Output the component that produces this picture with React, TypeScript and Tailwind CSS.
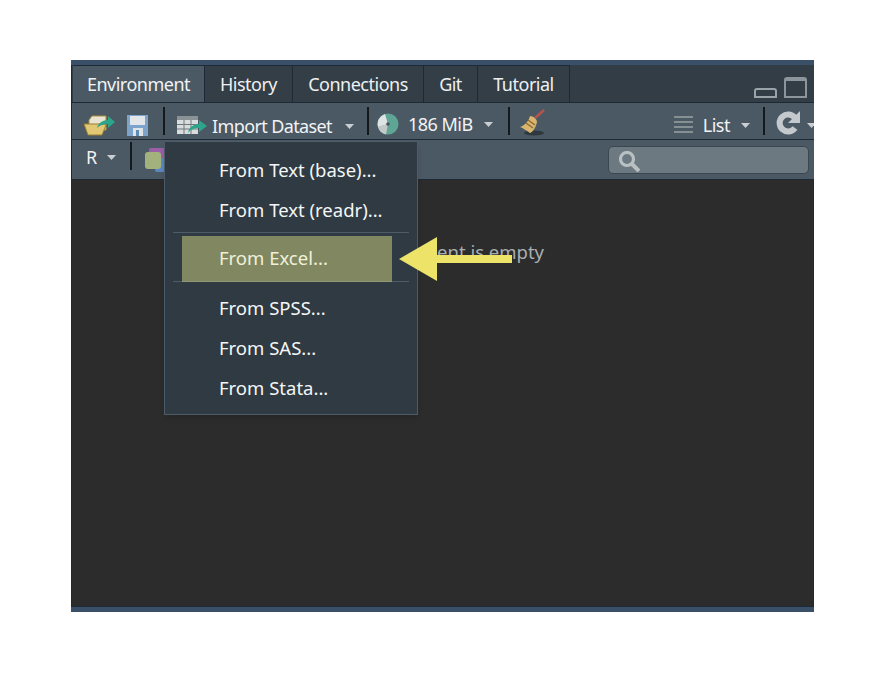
const font = "font-['Noto_Sans',sans-serif]";

const tabs = [
  { label: "Environment", width: "w-[132px]", active: true },
  { label: "History", width: "w-[88px]" },
  { label: "Connections", width: "w-[131px]" },
  { label: "Git", width: "w-[54px]" },
  { label: "Tutorial", width: "w-[92px]" },
];

const Caret = ({ className = "" }: { className?: string }) => (
  <svg width="9" height="5" viewBox="0 0 9 5" className={`shrink-0 ${className}`}>
    <path d="M0 0h9L4.5 5z" fill="#c9ced2" />
  </svg>
);

const Divider = () => <div className="h-[28px] w-[2px] bg-[#15191c]" />;

const FolderIcon = () => (
  <svg width="33" height="22" viewBox="0 0 33 22">
    <path d="M6 6 9 2h14v14H6z" fill="#e8e4d0" stroke="#a98f3e" />
    <path d="M1 10h20l2 1-4 10H5z" fill="#e2c874" stroke="#9a7f2e" />
    <path d="M14 14c1-5 6-8 11-8V2l7 6-7 6v-4c-4 0-8 1-11 4z" fill="#2ca58a" />
  </svg>
);

const SaveIcon = () => (
  <svg width="21" height="22" viewBox="0 0 21 22">
    <path d="M0 1h21v21H0z" fill="#7ca3c9" />
    <path d="M3 2h15v9H3z" fill="#e3e6e8" />
    <path d="M6 14h10v8H6z" fill="#dfe4e8" />
    <path d="M9 16h3v6H9z" fill="#5f8ab3" />
  </svg>
);

const ImportIcon = () => (
  <svg width="31" height="20" viewBox="0 0 31 20">
    <path d="M0 1h21v18H0z" fill="#d9dcdc" />
    <path d="M0 1h21v4H0z" fill="#8a9296" />
    <path d="M0 9.5h21M0 14h21M7 5v14M14 5v14" stroke="#70787c" />
    <path d="M11 18c1-6 6-9 11-9V5l8 6-8 6v-4c-4 0-8 1-11 5z" fill="#2ca58a" />
  </svg>
);

const MemoryIcon = () => (
  <svg width="22" height="22" viewBox="0 0 22 22">
    <circle cx="11" cy="11" r="10.5" fill="#5fa596" />
    <path d="M11 11 1 14a10.5 10.5 0 0 1 7-13z" fill="#dfe3e3" />
    <path d="M11 11 1 14a10.5 10.5 0 0 0 8 7.5z" fill="#c3c9c9" />
    <circle cx="11" cy="11" r="1.8" fill="#48555c" />
  </svg>
);

const BroomIcon = () => (
  <svg width="27" height="27" viewBox="0 0 27 27">
    <ellipse cx="15" cy="24" rx="10" ry="2.5" fill="#2f383e" />
    <path d="m16 9 9-8" stroke="#b5544c" strokeWidth="2.5" />
    <path d="M11 7c3 0 7 3 7 6-1 5-4 10-7 11-3-2-7-5-10-6 4-1 9-6 10-11z" fill="#d9b56e" />
    <path d="m9 11 7 5M7 14l7 5" stroke="#8f6a35" strokeWidth="1.5" />
  </svg>
);

const ListIcon = () => (
  <svg width="19" height="18" viewBox="0 0 19 18">
    <path d="M0 1h19M0 6h19M0 11h19M0 16h19" stroke="#9aa3a3" strokeWidth="1.5" />
  </svg>
);

const RefreshIcon = () => (
  <svg width="24" height="24" viewBox="0 0 24 24">
    <path d="M19 17a8.5 8.5 0 1 1 0-10" fill="none" stroke="#c3c9cd" strokeWidth="6" />
    <path d="M24 0v12H12z" fill="#c3c9cd" />
  </svg>
);

const SearchIcon = () => (
  <svg width="22" height="21" viewBox="0 0 22 21">
    <circle cx="9" cy="8" r="6.5" fill="none" stroke="#b8c0c4" strokeWidth="3.2" />
    <path d="m14 13 7 7" stroke="#b8c0c4" strokeWidth="4" />
  </svg>
);

const LayersIcon = () => (
  <div className="relative h-[24px] w-[20px]">
    <div className="absolute left-[4px] top-0 h-[19px] w-[16px] rounded-[2px] bg-[#9a5fa8]" />
    <div className="absolute left-[10px] top-[10px] h-[14px] w-[10px] rounded-[2px] bg-[#5b86c2]" />
    <div className="absolute left-0 top-[4px] h-[17px] w-[16px] rounded-[3px] bg-[#a3b27c]" />
  </div>
);

const MenuItem = ({ label }: { label: string }) => (
  <div className="flex h-[40px] items-center pl-[54px] text-[18.5px] text-[#f4f6f7]">{label}</div>
);

const ImportMenu = () => (
  <div className="absolute left-[93px] top-[81px] flex h-[274px] w-[254px] flex-col border border-[#4d5c68] bg-[#2f3a42] pt-[8px] shadow-md">
    <MenuItem label="From Text (base)..." />
    <MenuItem label="From Text (readr)..." />
    <div className="mx-[8px] mt-[2px] h-px bg-[#4d5c68]" />
    <div className="h-[48px]">
      <div className="relative z-10 flex h-[40px] items-center pl-[54px] pt-[10px] text-[18.5px] text-[#f0f0d8]">From Excel...</div>
    </div>
    <div className="mx-[8px] h-px bg-[#4d5c68]" />
    <div className="h-[6px]" />
    <MenuItem label="From SPSS..." />
    <MenuItem label="From SAS..." />
    <MenuItem label="From Stata..." />
  </div>
);

const Callout = () => (
  <>
    <div className="absolute left-[111px] top-[176px] h-[46px] w-[210px] bg-[#d4d67f]/50" />
    <svg width="114" height="44" viewBox="0 0 114 44" className="absolute left-[328px] top-[177px]">
      <path d="M0 22 38 0v18h75v8H38v18z" fill="#ece368" />
    </svg>
  </>
);

const App = () => {
  return (
    <div className={`h-[686px] w-[873px] overflow-hidden bg-white pl-[71px] pt-[60px] ${font}`}>
      <div className="relative flex h-[552px] w-[743px] flex-col overflow-hidden bg-[#3a5068]">
        <div className="mt-[5px] flex h-[38px] items-stretch border-b border-l border-[#1d2a35] bg-[#323d45] pl-[1px]">
          {tabs.map((tab) => (
            <div
              key={tab.label}
              className={`flex items-center justify-center border-r border-t border-[#1d2a35] text-[18px] tracking-[-0.5px] ${tab.width} ${
                tab.active ? "bg-[#4b5965] text-[#f1f3f4]" : "bg-[#333e46] text-[#eef0f1]"
              }`}
            >
              {tab.label}
            </div>
          ))}
          <div className="ml-auto flex items-end gap-[7px] pb-[4px] pr-[7px]">
            <div className="h-[10px] w-[23px] rounded-t-[3px] border-2 border-[#9aa3a8] bg-[#323d45]" />
            <div className="h-[21px] w-[23px] rounded-t-[3px] border-2 border-t-4 border-[#8b959b]" />
          </div>
        </div>

        <div className="flex h-[37px] items-center border-b border-l border-[#1d2a35] bg-[#4b5965] pl-[11px] text-[18px] tracking-[-0.5px] text-[#f1f3f4]">
          <div className="pt-[7px]"><FolderIcon /></div>
          <div className="ml-[11px] pt-[7px]"><SaveIcon /></div>
          <div className="ml-[15px]"><Divider /></div>
          <div className="ml-[12px] pt-[7px]"><ImportIcon /></div>
          <span className="ml-[4px] mt-[10px] tracking-[-0.62px]">Import Dataset</span>
          <Caret className="ml-[13px] mt-[10px]" />
          <div className="ml-[13px]"><Divider /></div>
          <div className="ml-[8px] pt-[5px]"><MemoryIcon /></div>
          <span className="ml-[9px] mt-[6px]">186 MiB</span>
          <Caret className="ml-[11px] mt-[6px]" />
          <div className="ml-[15px]"><Divider /></div>
          <div className="ml-[9px] pt-[3px]"><BroomIcon /></div>
          <div className="ml-auto mr-[-2px] flex items-center">
            <div className="pt-[7px]"><ListIcon /></div>
            <span className="ml-[10px] mt-[8px]">List</span>
            <Caret className="ml-[11px] mt-[8px]" />
            <div className="ml-[13px]"><Divider /></div>
            <div className="ml-[11px] pt-[3px]"><RefreshIcon /></div>
            <Caret className="ml-[7px] mt-[8px]" />
          </div>
        </div>

        <div className="flex h-[40px] items-center border-b border-l border-[#1d2a35] bg-[#4b5965] pl-[14px] text-[18px] text-[#f1f3f4]">
          <span className="mb-[4px]">R</span>
          <Caret className="ml-[10px] mb-[4px]" />
          <div className="ml-[14px] mb-[7px]"><Divider /></div>
          <div className="ml-[13px]"><LayersIcon /></div>
          <div className="ml-auto mr-[5px] flex h-[28px] w-[201px] items-center rounded-[5px] border border-[#3a4650] bg-[#6d7980] pl-[9px] pt-[3px]">
            <SearchIcon />
          </div>
        </div>

        <div className="flex h-[426px] justify-center border-x border-[#1d2a35] bg-[#2c2c2c] pl-[13px] pt-[58px]">
          <span className="text-[18.5px] leading-[28px] text-[#a8afb4]">Environment is empty</span>
        </div>
        <div className="h-[6px] border-t border-[#1d2a35] bg-[#3a5068]" />

        <ImportMenu />
        <Callout />
      </div>
    </div>
  );
};

export default App;
